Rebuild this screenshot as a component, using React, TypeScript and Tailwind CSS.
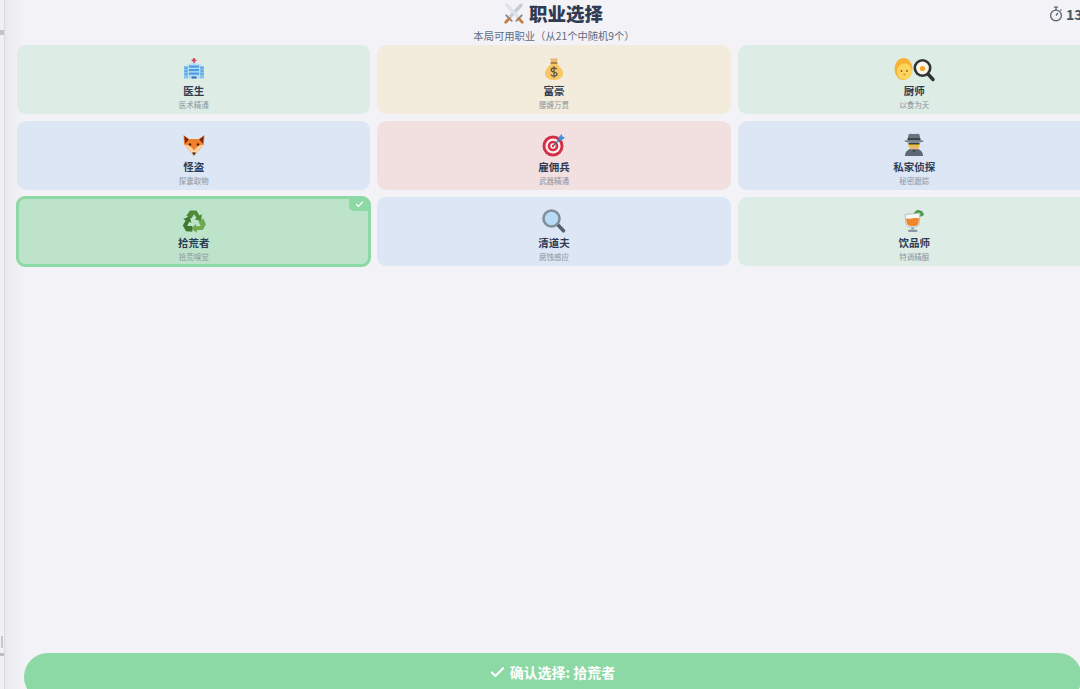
import { Check } from 'lucide-react'
import type { ReactNode } from 'react'

const Emoji = ({ children, w = 24 }: { children: ReactNode; w?: number }) => (
  <svg width={w} height="24" viewBox={`0 0 ${w} 24`} className="block overflow-visible">
    {children}
  </svg>
)

const Hospital = () => (
  <Emoji>
    <path d="M12 1v5M9.600 3.400h4.800" stroke="#d8465e" strokeWidth="1.800" />
    <path d="M5 7.500l7-1.800 7 1.800v14H5z" fill="#b9dcf6" />
    <rect x="2" y="9" width="4" height="12.500" fill="#8cc4ee" />
    <rect x="18" y="9" width="4" height="12.500" fill="#8cc4ee" />
    <rect x="7" y="8.500" width="10" height="2.200" fill="#4b9de0" />
    <rect x="7" y="12" width="10" height="2.200" fill="#4b9de0" />
    <rect x="7" y="15.500" width="10" height="2.200" fill="#4b9de0" />
    <rect x="9.500" y="19.500" width="5" height="2" fill="#2d6fa8" />
    <path d="M2.500 11h3M2.500 14h3M2.500 17h3M18.500 11h3M18.500 14h3M18.500 17h3" stroke="#3f8fd2" strokeWidth="1.200" />
  </Emoji>
)

const MoneyBag = () => (
  <Emoji>
    <path d="M8 1.500h8l-1.500 4.500h-5z" fill="#e9b872" />
    <rect x="8.600" y="5" width="6.800" height="2" fill="#b57f45" />
    <path d="M9 7h6c3 2.400 6 6 6 9.500 0 4-3.600 6.500-9 6.500s-9-2.500-9-6.500C3 13 6 9.400 9 7z" fill="#f7c766" />
    <path d="M14.800 12.400c-.6-1-1.600-1.400-2.800-1.400-1.600 0-2.800.8-2.800 2.100 0 2.800 5.800 1.300 5.800 4 0 1.300-1.300 2-3 2-1.300 0-2.400-.5-3-1.500M12 9.200v11.600" fill="none" stroke="#5d5a4a" strokeWidth="1.300" />
  </Emoji>
)

const Chef = () => (
  <Emoji w={42}>
    <ellipse cx="10.500" cy="12" rx="9" ry="11" fill="#f9b233" />
    <ellipse cx="11.500" cy="14.500" rx="7.500" ry="8" fill="#fcd65c" />
    <circle cx="8.500" cy="14" r="0.900" fill="#8a5a20" />
    <circle cx="14" cy="14" r="0.900" fill="#8a5a20" />
    <path d="M10.500 17.500h2" stroke="#d9743a" strokeWidth="1.200" />
    <path d="M34 16l6 6.500" stroke="#2f3336" strokeWidth="3.400" strokeLinecap="round" />
    <circle cx="29.500" cy="11" r="9" fill="#2f3336" />
    <circle cx="29.500" cy="11" r="6.400" fill="#fbf6ea" />
    <circle cx="29.500" cy="11.500" r="2.600" fill="#f6a623" />
  </Emoji>
)

const Fox = () => (
  <Emoji>
    <path d="M1.500 2l5.500 4h10l5.500-4-.6 9.500L12 23 2.100 11.500z" fill="#f0812a" />
    <path d="M2.200 3l4.600 3.500-3.600 4zM21.800 3l-4.600 3.500 3.600 4z" fill="#7a2616" />
    <path d="M2.500 11.500c3.500 0 7 2 9.500 6 2.500-4 6-6 9.500-6L12 23z" fill="#fbd3a5" />
    <circle cx="8" cy="11.500" r="1.200" fill="#3d2210" />
    <circle cx="16" cy="11.500" r="1.200" fill="#3d2210" />
    <path d="M10 19.500h4L12 22.500z" fill="#33231d" />
  </Emoji>
)

const Target = () => (
  <Emoji>
    <circle cx="11" cy="13" r="10.500" fill="#d32f45" />
    <circle cx="11" cy="13" r="7.600" fill="#fbeff0" />
    <circle cx="11" cy="13" r="5.300" fill="#d32f45" />
    <circle cx="11" cy="13" r="2.700" fill="#fbeff0" />
    <circle cx="11" cy="13" r="1.200" fill="#d32f45" />
    <path d="M11 13l8-8" stroke="#3e6f9e" strokeWidth="1.300" />
    <path d="M16 5l3.500-4 1 2.500 2.500 1-4 3.500z" fill="#4a90d9" />
  </Emoji>
)

const Spy = () => (
  <Emoji>
    <path d="M3 23c0-5 3.500-7.500 9-7.500s9 2.500 9 7.500z" fill="#5d6a75" />
    <path d="M9.500 15.500L12 20l2.500-4.500z" fill="#3b444c" />
    <rect x="7" y="8.500" width="10" height="8" rx="3" fill="#e8b77d" />
    <path d="M6.500 10h11v2.500c0 1-.8 1.800-2 1.800-1.300 0-2-.7-2.500-1.800h-2c-.5 1.100-1.200 1.800-2.500 1.800-1.200 0-2-.8-2-1.800z" fill="#f2c230" />
    <path d="M6.500 10h11v1.500h-11z" fill="#3a3f44" />
    <path d="M6.500 1.500C8 0 10 1 12 1s4-1 5.500.5L18.500 7h-13z" fill="#6a747d" />
    <path d="M2.500 7.500c3-1 16-1 19 0 .6 1.300-3 2.500-9.500 2.500s-10.100-1.200-9.500-2.500z" fill="#7b868f" />
    <rect x="5.600" y="5.300" width="12.800" height="1.600" fill="#343a40" />
  </Emoji>
)

const arrow = 'M8 1.500h6.500l3 5 2.500-1.300-1 7-6.500-2 2.200-1.200-2.700-3.800-2.700 4.300-5-2.800z'

const Recycle = () => (
  <Emoji>
    <path d={arrow} fill="#4f8a3a" />
    <path d={arrow} fill="#6ea84f" transform="rotate(120 12 13)" />
    <path d={arrow} fill="#3f7a30" transform="rotate(240 12 13)" />
  </Emoji>
)

const Magnifier = () => (
  <Emoji>
    <path d="M15.500 15.500l6 6.300" stroke="#55626d" strokeWidth="3.600" strokeLinecap="round" />
    <circle cx="9.500" cy="9.500" r="8" fill="#b9dcf6" stroke="#7f8f9b" strokeWidth="2.600" />
  </Emoji>
)

const Tumbler = () => (
  <Emoji>
    <path d="M12 5c0-2.500 3-4.500 5-4 1 1 2 .5 3 1 .5 1.500 2 2.500 2 4-1.500.5-2.500 2-4 1.500-2 0-5.500-.5-6-2.500z" fill="#4e9a4a" />
    <path d="M3 5.500l15-1.500-.8 10.500c-.3 2.500-2.400 3.500-4.500 3.500H9c-2.500 0-4.500-1-5-3.500z" fill="#f4f7f7" stroke="#a9b5bc" strokeWidth="0.800" />
    <path d="M4 9.500c3.500 1.200 8-1.500 13 0l-.6 5c-.3 1.500-1.700 2.500-3.200 2.500H9c-1.800 0-3.600-.8-4.200-2.400z" fill="#f0882b" />
    <rect x="9.300" y="18" width="2.800" height="3" fill="#a3afb7" />
    <rect x="6" y="20.700" width="9.500" height="2.300" rx="1" fill="#8b98a1" />
  </Emoji>
)

const Swords = () => (
  <svg width="22" height="22" viewBox="0 0 24 24" className="block">
    <path d="M21.500 1.500l-3 .6L6.500 15l2.500 2.500L21 5z" fill="#c3ccd4" />
    <path d="M2.500 1.500l3 .6L17.500 15 15 17.500 3 5z" fill="#dde3e8" />
    <path d="M3.500 14.500l6 6" stroke="#7d8c96" strokeWidth="2" strokeLinecap="round" />
    <path d="M20.500 14.500l-6 6" stroke="#7d8c96" strokeWidth="2" strokeLinecap="round" />
    <path d="M7 18l-4 4" stroke="#c97a3a" strokeWidth="3" strokeLinecap="round" />
    <path d="M17 18l4 4" stroke="#c97a3a" strokeWidth="3" strokeLinecap="round" />
  </svg>
)

const Timer = () => (
  <svg width="14" height="16" viewBox="0 0 14 16" fill="none" stroke="#5b6570" strokeWidth="1.300" className="block">
    <circle cx="7" cy="9.500" r="5.400" />
    <path d="M5 1.200h4M7 1.200v2.800M7 9.500l2-2.500M11.500 3.500l1 1" />
  </svg>
)

type Job = { name: string; sub: string; icon: ReactNode; bg: string; selected?: boolean }

const jobs: Job[] = [
  { name: '医生', sub: '医术精通', icon: <Hospital />, bg: 'bg-[#ddece4]' },
  { name: '富豪', sub: '腰缠万贯', icon: <MoneyBag />, bg: 'bg-[#f3ecdc]' },
  { name: '厨师', sub: '以食为天', icon: <Chef />, bg: 'bg-[#ddece4]' },
  { name: '怪盗', sub: '探囊取物', icon: <Fox />, bg: 'bg-[#dce6f5]' },
  { name: '雇佣兵', sub: '武器精通', icon: <Target />, bg: 'bg-[#f2dfe0]' },
  { name: '私家侦探', sub: '秘密跟踪', icon: <Spy />, bg: 'bg-[#dce6f5]' },
  { name: '拾荒者', sub: '拾荒嗅觉', icon: <Recycle />, bg: 'bg-[#bde4cb]', selected: true },
  { name: '清道夫', sub: '腐蚀感应', icon: <Magnifier />, bg: 'bg-[#dce6f5]' },
  { name: '饮品师', sub: '特调精酿', icon: <Tumbler />, bg: 'bg-[#ddece4]' },
]

function JobCard({ job }: { job: Job }) {
  return (
    <div
      className={`relative flex flex-col items-center justify-start rounded-[9px] ${job.bg} ${
        job.selected ? '-m-[1px] h-[71px] border-[3px] border-[#8cd9a5] pt-[10px]' : 'h-[69px] pt-[12px]'
      }`}
    >
      {job.selected && (
        <div className="absolute right-[-1px] top-[-1px] flex h-[13px] w-[20px] items-center justify-center rounded-bl-[5px] rounded-tr-[6px] bg-[#8cd9a5]">
          <Check size={9} color="white" strokeWidth={3.5} />
        </div>
      )}
      {job.icon}
      <div className="mt-[3px] text-[10.5px] font-bold leading-[14px] text-[#2f3b52]">{job.name}</div>
      <div className="mt-[0.5px] text-[7.5px] leading-[11px] text-[#8d94a0]">{job.sub}</div>
    </div>
  )
}

export default function App() {
  return (
    <div className="relative h-[689px] w-[1080px] overflow-hidden bg-[#f2f2f7] font-['Noto_Sans_CJK_SC','Noto_Sans',sans-serif]">
      {/* left window edge */}
      <div className="absolute inset-y-0 left-0 w-[24px] bg-gradient-to-r from-[#e6e6ea] via-[#eeeef2] to-[#f2f2f7]">
        <div className="h-full w-[5px] border-r border-[#dcdcdf] bg-[#f1f1f3]" />
        <div className="absolute left-0 top-[30px] h-[5px] w-[4px] bg-[#c4c4c8]" />
        <div className="absolute left-[1px] top-[636px] h-[12px] w-[2px] bg-[#c8c8cc]" />
        <div className="absolute left-0 top-[653px] h-[3px] w-[4px] bg-[#bdbdc1]" />
      </div>

      <div className="relative flex h-full w-[1091px] flex-col pl-[17px]">
        <header className="relative flex h-[45px] flex-col items-center">
          <div className="mt-[1px] flex h-[24px] -translate-x-[1px] items-center gap-[4px]">
            <Swords />
            <h1 className="text-[18.5px] font-black leading-[24px] text-[#2f3b52]">职业选择</h1>
          </div>
          <p className="mt-[4px] text-[10.3px] leading-[14px] text-[#5f6b80]">本局可用职业（从21个中随机9个）</p>
          <div className="absolute right-[1px] top-[5px] flex items-center gap-[3px]">
            <Timer />
            <span className="w-[24px] text-[14px] font-bold leading-[18px] text-[#4a5560]">13</span>
          </div>
        </header>

        <div className="grid grid-cols-3 gap-x-[7px] gap-y-[7px]">
          {jobs.map((job) => (
            <JobCard key={job.name} job={job} />
          ))}
        </div>

        <div className="ml-[7px] mr-[9px] mt-auto flex h-[48px] shrink-0 translate-y-[12px] items-start justify-center gap-[4px] rounded-[24px] bg-[#8cd9a5] pt-[10px] text-[14px] font-bold leading-[18px] text-white">
          <Check size={17} strokeWidth={3} className="-ml-[2px] mt-[1px]" />
          <span>确认选择: 拾荒者</span>
        </div>
      </div>
    </div>
  )
}
